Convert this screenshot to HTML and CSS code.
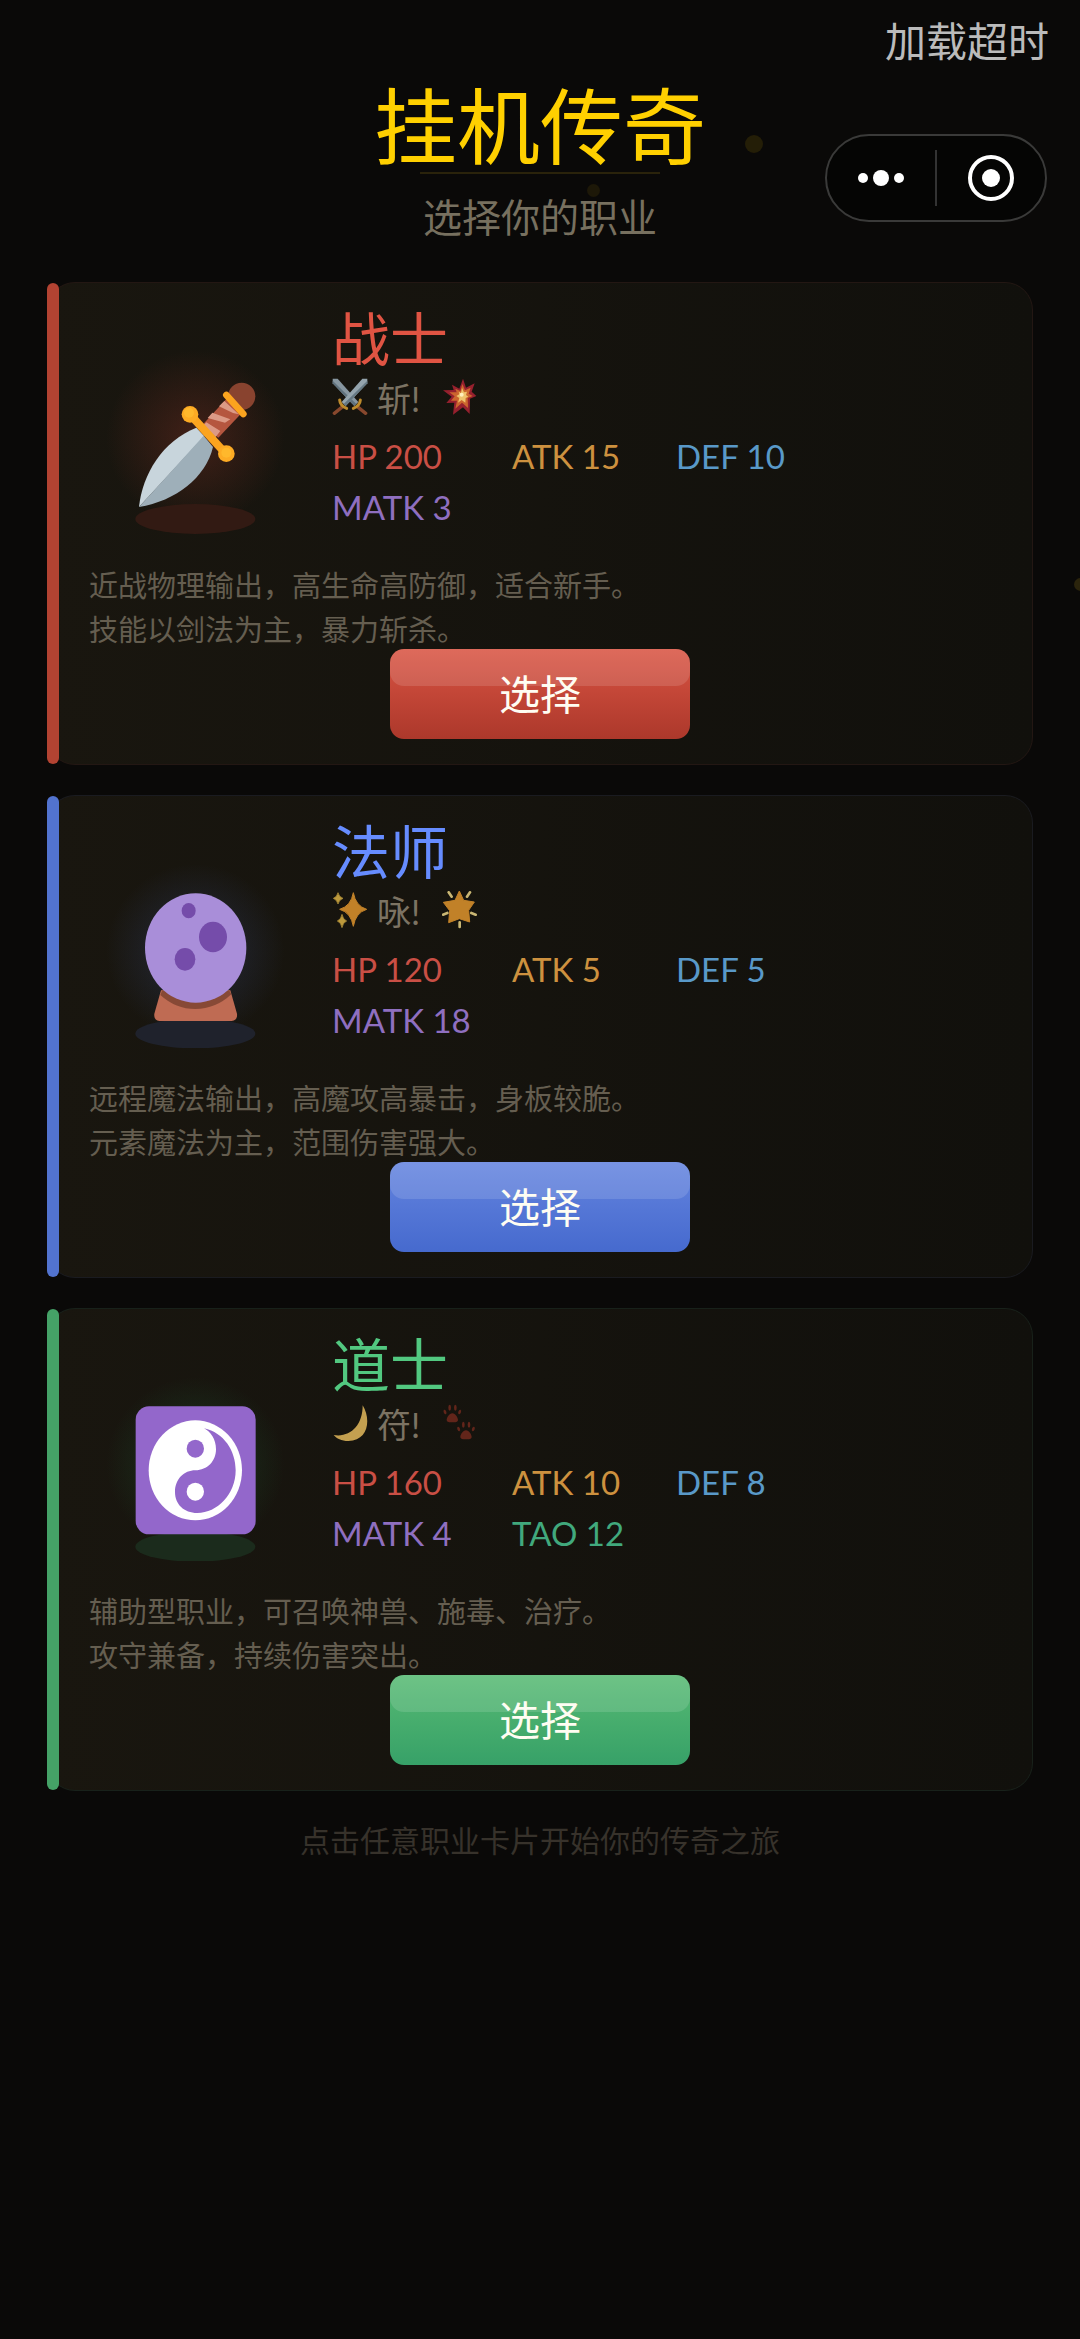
FILE: index.html
```
<!DOCTYPE html>
<html lang="zh-CN">
  <head>
    <meta charset="UTF-8" />
    <meta name="viewport" content="width=device-width, initial-scale=1.0" />
    <title>挂机传奇</title>
    <link rel="stylesheet" href="styles.css">
  </head>

  <body>
    <div class="page">
      <span class="spark spark1"></span>
      <span class="spark spark2"></span>
      <span class="spark spark3"></span>

      <div class="status">加载超时</div>

      <div class="capsule">
        <button type="button" aria-label="更多">
          <svg width="60" height="60" viewBox="0 0 60 60" fill="#fff">
            <circle cx="12" cy="30" r="5" />
            <circle cx="30" cy="30" r="8" />
            <circle cx="48" cy="30" r="5" />
          </svg>
        </button>
        <span class="divider"></span>
        <button type="button" aria-label="关闭">
          <svg width="60" height="60" viewBox="0 0 60 60">
            <circle cx="30" cy="30" r="21" fill="none" stroke="#fff" stroke-width="4" />
            <circle cx="30" cy="30" r="9" fill="#fff" />
          </svg>
        </button>
      </div>

      <header>
        <h1>挂机传奇</h1>
        <hr />
        <p class="subtitle">选择你的职业</p>
      </header>

      <main class="cards">
        <section class="card warrior">
          <div class="head">
            <svg class="portrait" viewBox="231 108 540 684">
              <defs>
                <radialGradient id="glowRed">
                  <stop offset="0" stop-color="#e74c3c" stop-opacity=".2" />
                  <stop offset="1" stop-color="#e74c3c" stop-opacity="0" />
                </radialGradient>
              </defs>
              <ellipse cx="499" cy="500" rx="268" ry="262" fill="url(#glowRed)" />
              <ellipse cx="499" cy="744" rx="180" ry="45" fill="#321a13" />
              <circle cx="638" cy="376" r="41" fill="#89432f" />
              <path d="M592 384 L636 428 L568 500 L520 462Z" fill="#b5563f" />
              <path d="M586 390 L570 406 L612 426 L629 430Z M550 425 L536 441 L588 455 L604 445Z M532 454 L522 464 L560 498 L574 480Z" fill="#dc9a86" />
              <path d="M592 372 L643 429" stroke="#fba41f" stroke-width="20" stroke-linecap="round" />
              <path d="M330 708 C340 610 400 510 502 470 L526 496Z" fill="#c8d5dc" />
              <path d="M330 708 C440 690 530 620 552 528 L524 494Z" fill="#9eafb9" />
              <path d="M482 429 L590 548" stroke="#fba41f" stroke-width="24" />
              <circle cx="483" cy="430" r="25" fill="#fdab24" />
              <circle cx="592" cy="548" r="25" fill="#fdab24" />
              <circle cx="480" cy="425" r="15" fill="#ffb82c" />
              <circle cx="592" cy="545" r="15" fill="#ffb82c" />
            </svg>
            <div class="info">
              <h2>战士</h2>
              <p class="skill">
                <svg viewBox="94 58 108 114">
                  <path d="M96 60 L111 60 L173 130 L161 142 L96 74Z" fill="#8796a0" />
                  <path d="M96 66 L167 136 L161 142 L96 74Z" fill="#5f717c" />
                  <path d="M200 60 L185 60 L123 130 L135 142 L200 74Z" fill="#94a4ad" />
                  <path d="M200 66 L129 136 L135 142 L200 74Z" fill="#657883" />
                  <path d="M126 144 L101 164 M170 144 L195 164" stroke="#88482d" stroke-width="10" stroke-linecap="round" />
                  <path d="M117 124 Q118 141 138 149 M179 124 Q178 141 158 149" fill="none" stroke="#bd8b2c" stroke-width="9" stroke-linecap="round" />
                </svg>
                <span>斩!</span>
                <svg class="last" viewBox="428 58 108 114">
                  <path d="M491 60 L500 87 L526 74 L517 99 L531 112 L512 120 L511 166 L491 146 L461 168 L465 132 L441 133 L457 114 L431 95 L463 94 L458 78 L480 90Z" fill="#96202e" />
                  <path d="M489 76 L497 95 L514 87 L508 105 L520 112 L505 118 L506 148 L488 132 L468 150 L473 126 L455 126 L466 113 L450 101 L472 101 L468 90 L483 97Z" fill="#cc652e" />
                  <path d="M488 88 L494 101 L503 99 L500 109 L507 114 L499 118 L498 132 L487 124 L476 132 L480 118 L471 112 L480 107 L478 99 L485 103Z" fill="#eec36c" />
                  <circle cx="487" cy="108" r="6" fill="#fff0bd" />
                </svg>
              </p>
              <ul class="stats">
                <li class="hp">HP 200</li>
                <li class="atk">ATK 15</li>
                <li class="def">DEF 10</li>
                <li class="matk">MATK 3</li>
              </ul>
            </div>
          </div>
          <p class="desc">近战物理输出，高生命高防御，适合新手。<br />技能以剑法为主，暴力斩杀。</p>
          <button type="button" class="choose">选择</button>
        </section>

        <section class="card mage">
          <div class="head">
            <svg class="portrait" viewBox="231 117 540 684">
              <defs>
                <radialGradient id="glowBlue">
                  <stop offset="0" stop-color="#5b82f0" stop-opacity=".2" />
                  <stop offset="1" stop-color="#5b82f0" stop-opacity="0" />
                </radialGradient>
              </defs>
              <ellipse cx="499" cy="510" rx="268" ry="262" fill="url(#glowBlue)" />
              <ellipse cx="499" cy="758" rx="180" ry="44" fill="#1f222c" />
              <path d="M396 628 L604 628 L624 698 Q626 719 608 720 L391 720 Q374 719 376 698Z" fill="#bf6b53" />
              <path d="M399 629 H601 L607 640 Q560 684 499 684 Q440 684 394 642Z" fill="#874936" />
              <ellipse cx="500" cy="501" rx="152" ry="164" fill="#a98ed9" />
              <ellipse cx="479" cy="389" rx="21" ry="23" fill="#754caa" />
              <ellipse cx="552" cy="468" rx="42" ry="46" fill="#754caa" />
              <ellipse cx="468" cy="535" rx="31" ry="34" fill="#754caa" />
            </svg>
            <div class="info">
              <h2>法师</h2>
              <p class="skill">
                <svg viewBox="94 38 108 114">
                  <path d="M158 43 Q165 83 198 93 Q165 103 158 144 Q151 103 117 93 Q151 83 158 43Z" fill="#c18128" stroke="#c18128" stroke-width="3" stroke-linejoin="round" />
                  <path d="M112 43 Q115 56 127 60 Q115 65 112 77 Q109 65 98 60 Q109 56 112 43Z M124 108 Q127 124 138 128 Q127 132 124 148 Q121 132 110 128 Q121 124 124 108Z" fill="#bd9a3c" stroke="#bd9a3c" stroke-width="2" />
                </svg>
                <span>咏!</span>
                <svg class="last" viewBox="428 38 108 114">
                  <path d="M480 38 L493 66 L525 71 L508 96 L511 131 L480 121 L448 133 L451 97 L432 72 L467 66Z" fill="#c18128" stroke="#c18128" stroke-width="3" stroke-linejoin="round" />
                  <path d="M448 42 L457 55 M512 42 L503 55 M431 109 L444 104 M516 104 L529 109 M481 132 V146" stroke="#c9b673" stroke-width="8" stroke-linecap="round" />
                </svg>
              </p>
              <ul class="stats">
                <li class="hp">HP 120</li>
                <li class="atk">ATK 5</li>
                <li class="def">DEF 5</li>
                <li class="matk">MATK 18</li>
              </ul>
            </div>
          </div>
          <p class="desc">远程魔法输出，高魔攻高暴击，身板较脆。<br />元素魔法为主，范围伤害强大。</p>
          <button type="button" class="choose">选择</button>
        </section>

        <section class="card taoist">
          <div class="head">
            <svg class="portrait" viewBox="231 126 540 684">
              <defs>
                <radialGradient id="glowGreen">
                  <stop offset="0" stop-color="#2ecc71" stop-opacity=".18" />
                  <stop offset="1" stop-color="#2ecc71" stop-opacity="0" />
                </radialGradient>
              </defs>
              <ellipse cx="499" cy="520" rx="268" ry="262" fill="url(#glowGreen)" />
              <ellipse cx="499" cy="767" rx="180" ry="45" fill="#1b2b1c" />
              <rect x="320" y="346" width="360" height="384" rx="40" fill="#9367cb" />
              <ellipse cx="499" cy="538" rx="140" ry="150" fill="#fff" />
              <path d="M525 412 C585 425 620 480 620 538 C620 610 565 666 505 666 C465 666 438 640 438 603 C438 565 465 538 499 538 C535 538 561 510 561 475 C561 445 545 422 525 412Z" fill="#9367cb" />
              <ellipse cx="499" cy="473" rx="26" ry="27" fill="#9367cb" />
              <ellipse cx="499" cy="602" rx="26" ry="27" fill="#fff" />
            </svg>
            <div class="info">
              <h2>道士</h2>
              <p class="skill">
                <svg viewBox="94 50 108 114">
                  <path d="M186 54 C212 96 203 160 143 161 C122 161 108 154 99 143 C148 151 186 116 186 54Z" fill="#c4a050" />
                </svg>
                <span>符!</span>
                <svg class="last" viewBox="428 50 108 114">
                  <g id="paw" fill="#62251a">
                    <path d="M459 78 C468 78 476 91 476 98 Q476 106 459 105 Q442 106 442 98 C442 91 450 78 459 78Z" />
                    <ellipse cx="437" cy="74" rx="4" ry="7" transform="rotate(-20 437 74)" />
                    <ellipse cx="451" cy="61" rx="4" ry="9" />
                    <ellipse cx="468" cy="61" rx="4" ry="9" />
                    <ellipse cx="481" cy="74" rx="4" ry="7" transform="rotate(20 481 74)" />
                  </g>
                  <use href="#paw" x="41" y="51" />
                </svg>
              </p>
              <ul class="stats">
                <li class="hp">HP 160</li>
                <li class="atk">ATK 10</li>
                <li class="def">DEF 8</li>
                <li class="matk">MATK 4</li>
                <li class="tao">TAO 12</li>
              </ul>
            </div>
          </div>
          <p class="desc">辅助型职业，可召唤神兽、施毒、治疗。<br />攻守兼备，持续伤害突出。</p>
          <button type="button" class="choose">选择</button>
        </section>
      </main>

      <p class="hint">点击任意职业卡片开始你的传奇之旅</p>
    </div>
  </body>
</html>
```
FILE: styles.css
```
* {
  box-sizing: border-box;
  margin: 0;
  padding: 0;
}

body {
  background: #0a0908;
  font-family: Lato, "Noto Sans CJK SC", sans-serif;
}

.page {
  position: relative;
  min-height: 100vh;
  padding: 0 47px;
  overflow: hidden;
}

.spark {
  position: absolute;
  width: 13px;
  height: 13px;
  border-radius: 50%;
  background: #1d1808;
}
.spark1 {
  top: 135px;
  left: 69%;
  width: 18px;
  height: 18px;
  background: #241e07;
}
.spark2 {
  top: 184px;
  left: 54%;
  margin-left: 4px;
}
.spark3 {
  top: 578px;
  right: -7px;
  background: #2b240c;
}

.status {
  margin-right: -16px;
  text-align: right;
  font-size: 41px;
  line-height: 84px;
  color: #bbb;
}

/* mini program menu, floats over the header */
.capsule {
  position: absolute;
  top: 134px;
  right: 33px;
  display: flex;
  align-items: center;
  width: 222px;
  height: 88px;
  border: 2px solid #3a3a39;
  border-radius: 44px;
  background: #050504;
}
.capsule button {
  flex: 1;
  display: flex;
  justify-content: center;
  border: none;
  background: none;
}
.divider {
  width: 2px;
  height: 56px;
  background: #333;
}

header {
  text-align: center;
}
h1 {
  font-size: 83px;
  font-weight: 400;
  line-height: 84px;
  color: #ffd000;
}
hr {
  width: 240px;
  height: 2px;
  margin: 4px auto 0;
  border: none;
  background: #2a230b;
}
.subtitle {
  margin-top: 17px;
  font-size: 39px;
  line-height: 52px;
  color: #77705f;
}

.cards {
  display: flex;
  flex-direction: column;
  gap: 30px;
  margin-top: 39px;
}

.card {
  --main: #b34332;
  --title: #e05443;
  --line: #231713;
  --top: #d95443;
  --bottom: #ac382b;
  position: relative;
  padding: 24px 41px 25px;
  border: 1px solid var(--line);
  border-radius: 28px;
  background: linear-gradient(90deg, #19160f, #11100c);
}
.card::before {
  content: "";
  position: absolute;
  top: 0;
  bottom: 0;
  left: -1px;
  width: 12px;
  border-radius: 6px;
  background: var(--main);
}
.mage {
  --main: #5273cf;
  --title: #668cff;
  --line: #1a1b20;
  --top: #6484df;
  --bottom: #466ace;
}
.taoist {
  --main: #45a267;
  --title: #52c880;
  --line: #18211a;
  --top: #57ba73;
  --bottom: #37a168;
}

.head {
  display: flex;
  gap: 46px;
  padding-left: 17px;
}
.portrait {
  flex: none;
  width: 180px;
  height: 228px;
  margin-bottom: -2px;
}
.info {
  flex: 1;
}
h2 {
  font-size: 58px;
  font-weight: 400;
  line-height: 64px;
  color: var(--title);
}
.skill {
  display: flex;
  align-items: center;
  height: 48px;
  margin: 2px 0 10px;
  font-size: 34px;
  color: #7c7363;
}
.skill svg {
  width: 36px;
  height: 38px;
  margin-right: 9px;
}
.skill .last {
  margin: 0 0 0 22px;
}
.stats {
  display: grid;
  grid-template-columns: 180px 164px auto;
  justify-content: start;
  list-style: none;
  font-size: 33px;
  line-height: 51px;
}
.hp {
  color: #c94f45;
}
.atk {
  color: #cd913f;
}
.def {
  color: #5999c8;
}
.matk {
  color: #8f6fc0;
}
.tao {
  color: #41a97d;
}

.desc {
  margin-top: 31px;
  font-size: 29px;
  line-height: 44px;
  color: #655e50;
}

.choose {
  display: block;
  position: relative;
  width: 300px;
  height: 90px;
  margin: -3px auto 0;
  padding-bottom: 4px;
  border: none;
  border-radius: 14px;
  background: linear-gradient(var(--top), var(--bottom));
  color: #fffdf2;
  font-family: inherit;
  font-size: 41px;
}
.choose::before {
  content: "";
  position: absolute;
  top: 0;
  left: 0;
  right: 0;
  height: 37px;
  border-radius: 14px;
  background: rgba(255, 255, 255, 0.13);
}

.hint {
  margin-top: 27px;
  text-align: center;
  font-size: 30px;
  line-height: 44px;
  color: #37322b;
}
```
